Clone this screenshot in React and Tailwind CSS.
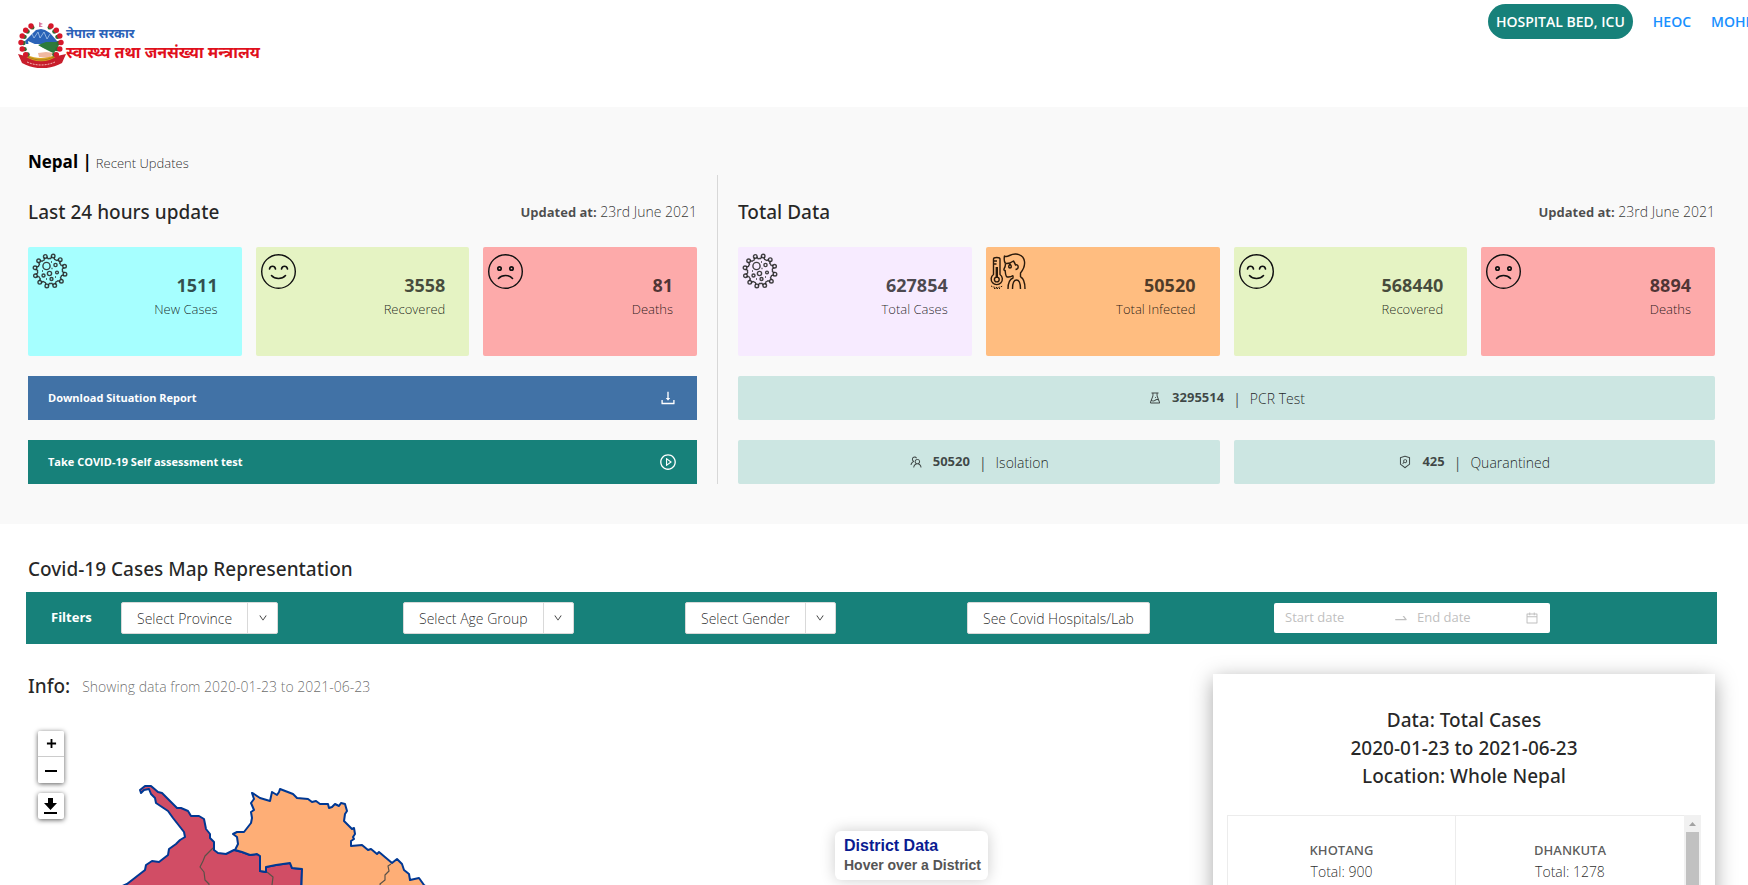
import React from "react";
import {
  AiOutlineExperiment,
  AiOutlineDownload,
  AiOutlinePlayCircle,
  AiOutlineTeam,
  AiOutlineSecurityScan,
  AiOutlineCalendar,
  AiOutlineDown,
  AiOutlineSwapRight,
} from "react-icons/ai";

const ring = (count, radius, cx, cy, offset = 0) =>
  Array.from({ length: count }, (_, i) => {
    const a = ((i + offset) / count) * Math.PI * 2;
    return [cx + Math.cos(a) * radius, cy + Math.sin(a) * radius, a];
  });

function Emblem() {
  return (
    <svg viewBox="0 0 48 47" className="h-[47px] w-12 shrink-0" aria-hidden="true">
      <ellipse cx="23" cy="23" rx="16" ry="17" fill="#fff" />
      <path d="M7 20 13 14l5-5 5-1 4 1 5 3 7 8v3L8 23z" fill="#2a63b8" />
      <path d="M14 13l2 4 4-6 2 6 4-6 3 7 3-5" stroke="#a9c6ea" strokeWidth=".8" fill="none" />
      <path d="M20 24l8-3 13 0-1 7-6 5-8-5z" fill="#2c7a3b" />
      <path d="M10 20l9 4 8 4 8 4-5 3-10-3-9-5z" fill="#fff" />
      <path d="M20 32l8-1 8 1-5 5-10-1z" fill="#f0b8a0" />
      <path d="M9 34c9 4 19 4 28 0v6c-9 4-19 4-28 0z" fill="#d9a421" />
      <path d="M10 36c9 4 17 4 26 0M10 39c9 4 17 4 26 0" stroke="#8a6a1a" strokeWidth=".6" fill="none" />
      {ring(18, 1, 0, 0).map(([x, y], i) =>
        y > -0.97 && y < 0.75 ? (
          <g key={i}>
            <circle cx={23 + x * 17.5} cy={22 + y * 18} r="2.2" fill="#2f6b34" />
            <circle cx={23 + x * 20} cy={21.5 + y * 19} r="2.700" fill="#d6182b" />
          </g>
        ) : null
      )}
      <path d="M21 1l4 2-3 1 3 2h-4z" fill="#c2185b" opacity=".6" />
      <path d="M0 33l7 2c9 7 23 7 32 0l9-2-4 9c-12 7-28 7-40 0z" fill="#c81e2c" />
      <path d="M9 41c9 4 19 4 28 0" stroke="#f3b4b4" strokeWidth="1" strokeDasharray="2 1" fill="none" />
    </svg>
  );
}

function VirusIcon() {
  return (
    <svg viewBox="0 0 36 36" className="size-9" fill="none" stroke="#222" strokeOpacity=".85" strokeWidth="1.4" aria-hidden="true">
      {ring(12, 1, 0, 0, 0.4).map(([x, y], i) => (
        <g key={i}>
          <path d={`M${18 + x * 12.5 - y * 1.5} ${18 + y * 12.5 + x * 1.5}l${x * 2} ${y * 2}M${18 + x * 12.5 + y * 1.5} ${18 + y * 12.5 - x * 1.5}l${x * 2} ${y * 2}`} />
          <circle cx={18 + x * 15.3} cy={18 + y * 15.3} r="1.8" />
          <path d={`M${18 + Math.cos(Math.atan2(y, x) + 0.12) * 12.5} ${18 + Math.sin(Math.atan2(y, x) + 0.12) * 12.5}A12.5 12.5 0 0 1 ${18 + Math.cos(Math.atan2(y, x) + 0.4) * 12.5} ${18 + Math.sin(Math.atan2(y, x) + 0.4) * 12.5}`} />
        </g>
      ))}
      <circle cx="14.5" cy="13" r="3.6" />
      <circle cx="23.500" cy="12" r="1.600" />
      <circle cx="17.500" cy="20.500" r="2.100" />
      <circle cx="25" cy="19.500" r="1.400" />
      <circle cx="11.500" cy="22.500" r="1.500" />
      <circle cx="19.500" cy="26" r="1.500" />
      <path d="M19.500 15.500h1M23 24h1M10 18h1M14 26h1M19 9h1" />
    </svg>
  );
}

function FaceIcon({ sad }) {
  return (
    <svg viewBox="0 0 36 36" className="size-9" fill="none" stroke="#111" strokeWidth="1.4" strokeLinecap="round" aria-hidden="true">
      <circle cx="18.500" cy="18.500" r="16.800" />
      {sad ? (
        <>
          <circle cx="12.500" cy="15.500" r="1.700" strokeWidth="1.700" />
          <circle cx="24.500" cy="15.500" r="1.700" strokeWidth="1.700" />
          <path d="M11.500 25.500c3.500-4 10.500-4 14 0" strokeWidth="1.600" />
        </>
      ) : (
        <>
          <path d="M9.500 16c.8-3.600 5.200-3.600 6 0M21.500 16c.8-3.600 5.200-3.600 6 0" strokeWidth="1.600" />
          <path d="M11.500 22.500c3.500 4 10.500 4 14 0" strokeWidth="1.600" />
        </>
      )}
    </svg>
  );
}

function FeverIcon() {
  return (
    <svg viewBox="0 0 36 36" className="size-9" fill="none" stroke="#2a1a0c" strokeWidth="1.4" strokeLinejoin="round" aria-hidden="true">
      <path d="M3.500 21.500V6c0-2 6.500-2 6.500 0v15.500a5.600 5.600 0 1 1-6.500 0z" />
      <path d="M6.800 14v11" strokeWidth="2.400" />
      <path d="M4 8h3M4 11h2.500" />
      <circle cx="6.800" cy="26.500" r="2.400" />
      <path d="M1 33c3.500 2 8 2 11.500 0M4 35.500h6" strokeDasharray="1.500 1" strokeWidth="1" />
      <path d="M15.500 10.500c-1.500-2-1.500-5-1-7.500 1.500 1 3 .5 5-.5 6-3 14-1.500 15 6 .5 4-1 8-4 11.500V24" />
      <path d="M15.500 10.500c0 2-.2 3.500-1.500 5.500-.5 1 .5 1.500 1.200 1.500.3 3.500.3 6.500 2.300 6.500 2.500.2 4-.2 5.500-1.500" />
      <path d="M15.500 10.500c4 .5 6-1 8-2.500 1 1.500 1.500 2.500 2 4 3-1.500 4 4 0 4.500" />
      <path d="M20 11c-2 2.500-1.500 4 0 4s2-1.500 0-4z" />
      <path d="M23 22.500V25c-4 1.500-5 5-5 11M30.500 24c3.500 1.500 4.500 5 4.500 12M22.500 36c0-6 1-9 4-9s4 3 4 9" />
    </svg>
  );
}

function StatCard({ tone, icon, value, label }) {
  return (
    <article className={`flex h-[109px] min-w-0 flex-1 justify-between rounded-xs pt-[6px] pr-6 pl-1 ${tone}`}>
      {icon}
      <div className="pt-5 text-right text-black/70">
        <p className="text-lg leading-6 font-bold">{value}</p>
        <p className="text-[13px] leading-6 font-light text-black/85">{label}</p>
      </div>
    </article>
  );
}

function PanelHead({ title }) {
  return (
    <div className="flex items-center justify-between">
      <h2 className="font-['Noto_Sans',sans-serif] text-[19px] leading-7 font-medium text-black/85">{title}</h2>
      <p className="text-[14px] font-light text-black/80">
        <b className="text-[13px] font-bold text-black/70">Updated at:</b> 23rd June 2021
      </p>
    </div>
  );
}

function CountStrip({ icon, value, label }) {
  return (
    <div className="flex h-11 min-w-0 flex-1 items-center justify-center rounded-xs bg-[#cce6e2] text-[14px] text-black/70">
      {icon}
      <b className="ml-[10px] text-[13px]">{value}</b>
      <span className="mx-[9px]">|</span>
      <span className="font-light text-black/85">{label}</span>
    </div>
  );
}

function FilterMenu({ label }) {
  return (
    <div className="flex h-8 w-fit rounded-xs border border-[#d9d9d9] bg-white text-[14px] font-light text-black/85">
      <button type="button" className="px-[15px]">{label}</button>
      <button type="button" aria-label={`Open ${label}`} className="flex w-[30px] items-center justify-center border-l border-[#d9d9d9]">
        <AiOutlineDown size={10} />
      </button>
    </div>
  );
}

const darkRed =
  "M-20 130L17 114L35 100L36 95L42 91L49 92L58 85L59 79L66 74L70 70L75 67L74 62L63 48L58 41L46 33L45 28L41 24L39 19L34 20L31 23L30 20L35 16L41 16L48 22L52 23L67 38L71 38L78 41L81 46L89 46L94 49L96 59L100 64L100 68L104 72L104 80L108 83L116 84L120 82L124 80L132 82L140 85L147 84L150 86L150 101L156 102L156 97L166 95L180 93L182 98L192 99L191 130Z";
const orange =
  "M125 80L128 74L127 67L123 64L127 62L134 62L141 53L142 48L141 42L144 40L141 33L144 29L142 23L144 24L150 28L160 31L162 22L167 25L169 22L170 19L183 24L187 28L198 29L202 32L206 31L210 34L218 34L219 38L222 37L225 34L229 36L231 33L235 34L237 41L235 44L234 51L239 56L242 59L244 58L245 64L243 67L244 69L241 71L241 76L252 75L258 80L261 79L267 84L269 82L282 93L287 89L292 94L294 100L299 104L300 110L309 108L314 115L330 128L191 130L192 99L182 98L180 93L166 95L156 97L156 102L150 101L150 86L147 84L140 85L132 82Z";

function NepalMap() {
  return (
    <svg viewBox="0 0 360 130" className="ml-[46px] h-[130px] w-[360px]" strokeLinejoin="round" aria-label="Map of Nepal districts" role="img">
      <path d={darkRed} fill="#d14d65" stroke="#003893" strokeWidth="2" />
      <path d={orange} fill="#feae76" stroke="#003893" strokeWidth="2" />
      <path d="M103 78L95 86L93 91L90 97L94 102L95 110L99 114L98 125M157 102L163 107L162 115L160 125M281 94L278 96L279 101L275 105L275 110L270 114L271 119" fill="none" stroke="#5a5148" strokeWidth="1.200" />
    </svg>
  );
}

const mapButton = "flex size-[26px] items-center justify-center bg-white text-black";

export default function App() {
  return (
    <div className="h-screen overflow-hidden bg-white font-['Open_Sans','Noto_Sans',sans-serif] text-black/65">
      <header className="flex h-[107px] justify-between pl-[18px]">
        <a href="#home" className="flex h-fit pt-[21px]">
          <Emblem />
          <span className="flex flex-col font-['Noto_Sans_Devanagari','Noto_Sans',sans-serif] font-bold whitespace-nowrap">
            <span className="pt-1 text-[13px] leading-5 text-[#2b62b8]">नेपाल सरकार</span>
            <span className="text-[16px] leading-5 text-[#e0101c]">स्वास्थ्य तथा जनसंख्या मन्त्रालय</span>
          </span>
        </a>
        <nav className="flex w-[260px] items-start gap-5 overflow-hidden pt-1 text-[14px] leading-[35px] font-semibold whitespace-nowrap text-[#1890ff]">
          <a href="#beds" className="rounded-full bg-[#17817a] px-2 text-white">HOSPITAL BED, ICU</a>
          <a href="#heoc">HEOC</a>
          <a href="#mohp">MOHP</a>
        </nav>
      </header>

      <section className="bg-[#f9f9f9] pt-10 pr-[33px] pb-10 pl-7">
        <div className="flex h-7 items-baseline gap-1">
          <h1 className="text-[17px] leading-[30px] font-bold text-black">Nepal |</h1>
          <span className="text-[13px] font-light text-black/85">Recent Updates</span>
        </div>
        <div className="flex">
          <div className="flex w-[669px] shrink flex-col gap-5 pt-[23px]">
            <PanelHead title="Last 24 hours update" />
            <div className="mt-[1px] flex gap-[14px]">
              <StatCard tone="bg-[#a6ffff]" icon={<VirusIcon />} value="1511" label="New Cases" />
              <StatCard tone="bg-[#e5f3c3]" icon={<FaceIcon />} value="3558" label="Recovered" />
              <StatCard tone="bg-[#fdaaaa]" icon={<FaceIcon sad />} value="81" label="Deaths" />
            </div>
            <a href="#report" className="flex h-11 items-center justify-between bg-[#4172a6] px-5 text-[11px] font-bold text-white">
              Download Situation Report <AiOutlineDownload size={18} />
            </a>
            <a href="#assessment" className="flex h-11 items-center justify-between bg-[#17817a] px-5 text-[11px] font-bold text-white">
              Take COVID-19 Self assessment test <AiOutlinePlayCircle size={18} />
            </a>
          </div>
          <div className="mx-5 w-px bg-[#d8d8d8]" />
          <div className="flex min-w-0 flex-1 flex-col gap-5 pt-[23px]">
            <PanelHead title="Total Data" />
            <div className="mt-[1px] flex gap-[14px]">
              <StatCard tone="bg-[#f7ebff]" icon={<VirusIcon />} value="627854" label="Total Cases" />
              <StatCard tone="bg-[#ffbd80]" icon={<FeverIcon />} value="50520" label="Total Infected" />
              <StatCard tone="bg-[#e5f3c3]" icon={<FaceIcon />} value="568440" label="Recovered" />
              <StatCard tone="bg-[#fdaaaa]" icon={<FaceIcon sad />} value="8894" label="Deaths" />
            </div>
            <div className="flex">
              <CountStrip icon={<AiOutlineExperiment size={14} />} value="3295514" label="PCR Test" />
            </div>
            <div className="flex gap-[14px]">
              <CountStrip icon={<AiOutlineTeam size={14} />} value="50520" label="Isolation" />
              <CountStrip icon={<AiOutlineSecurityScan size={14} />} value="425" label="Quarantined" />
            </div>
          </div>
        </div>
      </section>

      <main>
        <h2 className="px-7 pt-[31px] pb-[9px] font-['Noto_Sans',sans-serif] text-[19px] leading-7 font-medium text-black/85">Covid-19 Cases Map Representation</h2>
        <div className="mr-[31px] ml-[26px] flex h-[52px] items-center bg-[#17817a] pl-[25px]">
          <span className="w-[70px] text-[13px] font-bold text-white">Filters</span>
          <div className="w-[282px]"><FilterMenu label="Select Province" /></div>
          <div className="w-[282px]"><FilterMenu label="Select Age Group" /></div>
          <div className="w-[282px]"><FilterMenu label="Select Gender" /></div>
          <div className="w-[307px]">
            <button type="button" className="h-8 rounded-xs border border-[#d9d9d9] bg-white px-[15px] text-[14px] font-light text-black/85">See Covid Hospitals/Lab</button>
          </div>
          <div className="flex h-[30px] w-[276px] items-center rounded-xs bg-white px-[11px] text-[13px] text-[#bfbfbf]">
            <input aria-label="Start date" placeholder="Start date" className="w-[108px] outline-none placeholder:text-[#bfbfbf]" />
            <AiOutlineSwapRight size={16} />
            <input aria-label="End date" placeholder="End date" className="ml-2 w-[108px] outline-none placeholder:text-[#bfbfbf]" />
            <AiOutlineCalendar size={14} />
          </div>
        </div>

        <div className="flex pt-[30px] pr-[33px] pl-7">
          <section className="relative min-w-0 flex-1">
            <div className="flex h-6 items-center gap-3">
              <h2 className="font-['Noto_Sans',sans-serif] text-[19px] font-medium text-black/85">Info:</h2>
              <p className="text-[14px] font-light text-black/60">Showing data from 2020-01-23 to 2021-06-23</p>
            </div>
            <div className="flex pt-[33px]">
              <div className="ml-[10px] flex w-[26px] shrink-0 flex-col gap-[10px]">
                <div className="overflow-hidden rounded-xs shadow-[0_1px_5px_rgba(0,0,0,0.65)]">
                  <button type="button" aria-label="Zoom in" className={`${mapButton} border-b border-[#ccc]`}>
                    <svg viewBox="0 0 12 12" className="size-[11px]" stroke="currentColor" strokeWidth="2"><path d="M6 1v10M1 6h10" /></svg>
                  </button>
                  <button type="button" aria-label="Zoom out" className={mapButton}>
                    <svg viewBox="0 0 12 12" className="size-3" stroke="currentColor" strokeWidth="2"><path d="M0 7h12" /></svg>
                  </button>
                </div>
                <button type="button" aria-label="Download map" className={`${mapButton} rounded-xs shadow-[0_1px_5px_rgba(0,0,0,0.65)]`}>
                  <svg viewBox="0 0 16 18" className="h-[18px] w-4" fill="currentColor"><path d="M5 1h5v5h4l-6.500 7L1 6h4zM1 15h13v2H1z" /></svg>
                </button>
              </div>
              <div className="pt-[39px]"><NepalMap /></div>
            </div>
            <div className="absolute top-[157px] left-[807px] w-[153px] rounded-md bg-white px-[9px] py-[5px] font-['Liberation_Sans',sans-serif] font-bold whitespace-nowrap shadow-[0_0_15px_rgba(0,0,0,0.2)]">
              <h3 className="text-[16px] leading-5 text-[#0a1b91]">District Data</h3>
              <p className="text-[14px] leading-[19px] text-[#555]">Hover over a District</p>
            </div>
          </section>

          <aside className="h-[300px] w-[502px] shrink-0 bg-white px-[14px] pt-8 shadow-[0_5px_20px_rgba(0,0,0,0.35)]">
            <h2 className="text-center font-['Noto_Sans',sans-serif] text-[19px] leading-7 font-medium text-black/85">
              Data: Total Cases<br />2020-01-23 to 2021-06-23<br />Location: Whole Nepal
            </h2>
            <div className="mt-[25px] flex h-[180px]">
              <div className="grid flex-1 grid-cols-2 border-t border-l border-[#ececec] text-center leading-[22px]">
                <div className="border-r border-[#ececec] pt-[22px]"><b className="text-[13px] font-semibold">KHOTANG</b><p className="text-[14px] font-light text-black/85">Total: 900</p></div>
                <div className="pt-[22px]"><b className="text-[13px] font-semibold">DHANKUTA</b><p className="text-[14px] font-light text-black/85">Total: 1278</p></div>
              </div>
              <div className="flex w-[17px] flex-col items-center bg-[#f1f1f1]">
                <svg viewBox="0 0 17 17" className="size-[17px]" fill="#a3a3a3"><path d="M5 11h7L8.500 7z" /></svg>
                <div className="w-[13px] flex-1 bg-[#c1c1c1]" />
              </div>
            </div>
          </aside>
        </div>
      </main>
    </div>
  );
}
